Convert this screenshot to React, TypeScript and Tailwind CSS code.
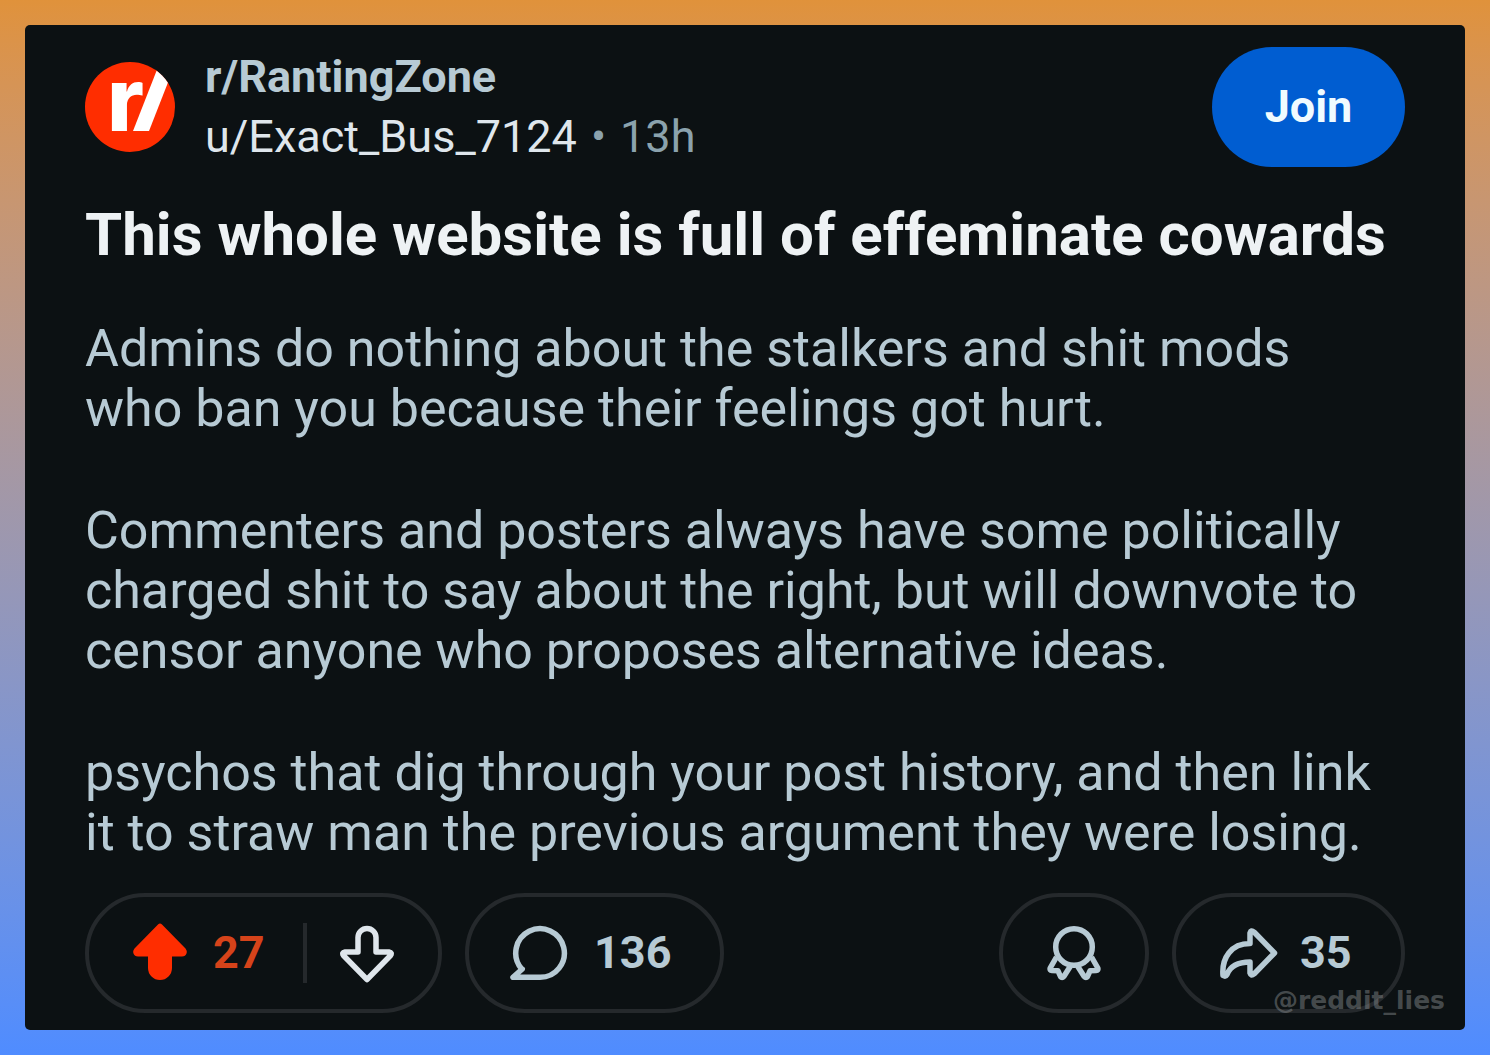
const paragraphs: string[][] = [
  ['Admins do nothing about the stalkers and shit mods', 'who ban you because their feelings got hurt.'],
  [
    'Commenters and posters always have some politically',
    'charged shit to say about the right, but will downvote to',
    'censor anyone who proposes alternative ideas.',
  ],
  [
    'psychos that dig through your post history, and then link',
    'it to straw man the previous argument they were losing.',
  ],
];

const pill = 'flex h-[120px] items-center rounded-full border-4 border-[#25292c]';

function CommunityLogo() {
  return (
    <svg viewBox="0 0 90 90" className="size-[90px] shrink-0 overflow-visible" role="img" aria-label="RantingZone">
      <defs>
        <clipPath id="logo-circle">
          <circle cx="45" cy="45" r="45" />
        </clipPath>
      </defs>
      <circle cx="45" cy="45" r="45" fill="#ff2d00" />
      <text x="22" y="69" fontFamily="Inter" fontWeight="800" fontSize="88" fill="#fff">
        r
      </text>
      <path d="M48 69L75 0H91L64 69Z" fill="#fff" stroke="#ff2d00" strokeWidth="4" paintOrder="stroke" clipPath="url(#logo-circle)" />
    </svg>
  );
}

function UpvoteIcon() {
  return (
    <svg viewBox="0 0 54 60" className="h-[60px] w-[54px]" aria-hidden="true">
      <path
        d="M25 1.500Q27 -.5 29 1.500L52.500 25.500Q54.500 28 53.500 30.500Q52.500 33.500 49 33.500H39V45A12 12 0 0 1 15 45V33.500H5Q1.500 33.500 .5 30.500Q-.5 28 1.500 25.500Z"
        fill="#ff2d00"
      />
    </svg>
  );
}

function DownvoteIcon() {
  return (
    <svg viewBox="0 -2 54 60" className="h-[60px] w-[54px]" fill="none" stroke="#dfe6ec" strokeWidth="5.5" strokeLinejoin="round" aria-hidden="true">
      <path d="M18 27V12.500A9 9 0 0 1 36 12.500V27H49Q52.500 27.500 50.500 30.500L27 54.500L3.500 30.500Q1.500 27.500 5 27Z" />
    </svg>
  );
}

function CommentIcon() {
  return (
    <svg viewBox="0 0 58 56" className="h-[56px] w-[58px]" fill="none" stroke="#b7cad4" strokeWidth="5.5" strokeLinejoin="round" aria-hidden="true">
      <path d="M3 52.300H30A24.300 24.300 0 1 0 11.500 43.700L12.300 44Z" />
    </svg>
  );
}

function AwardIcon() {
  return (
    <svg viewBox="0 -1 54 56" className="h-[56px] w-[54px]" fill="none" stroke="#b7cad4" strokeWidth="5.5" strokeLinejoin="round" aria-hidden="true">
      <circle cx="27" cy="21" r="18.300" />
      <path d="M9.500 31L3.200 42Q2.500 44.300 5 44.500L11 44.800L13.500 50.500Q15 52.500 16.800 50.500L23.500 40" />
      <path d="M44.500 31L50.800 42Q51.500 44.300 49 44.500L43 44.800L40.500 50.500Q39 52.500 37.200 50.500L30.500 40" />
    </svg>
  );
}

function ShareIcon() {
  return (
    <svg viewBox="-1 -1 58 52" className="h-[52px] w-[58px] overflow-visible" fill="none" stroke="#b7cad4" strokeWidth="5.5" strokeLinejoin="round" aria-hidden="true">
      <path d="M30 15.500V5Q31 1.500 34 4L54.500 25L34 46Q31 48.500 30 45V34C18 34 10.500 37.500 7 46.500Q5.500 49 3 47.500C1.500 30 11 15.500 30 15.500Z" />
    </svg>
  );
}

export default function App() {
  return (
    <main className="min-h-screen bg-linear-to-b from-[#e0923b] to-[#4f8cff] p-[25px] font-[Roboto,sans-serif]">
      <article className="relative rounded-[5px] bg-[#0c1113] px-[60px] pt-[22px] pb-[17px]">
        <header className="flex items-center gap-[30px]">
          <CommunityLogo />
          <div className="flex-1 text-[45px] leading-[60px]">
            <a href="#community" className="block font-bold text-[#b7cad4]">
              r/RantingZone
            </a>
            <p className="flex gap-[14px] text-[#8ba2ad]">
              <a href="#author" className="text-[#dfe6ec]">
                u/Exact_Bus_7124
              </a>
              <span>•</span>
              <span>13h</span>
            </p>
          </div>
          <button className="h-[120px] w-[193px] rounded-full bg-[#005dd1] text-[45px] font-bold text-[#f0fbff]">Join</button>
        </header>

        <h1 className="mt-[32px] text-[60px] leading-[72px] font-bold whitespace-nowrap text-[#eef2f4]">
          This whole website is full of effeminate cowards
        </h1>

        <div className="mt-[48px] flex flex-col gap-[62px] text-[52px] leading-[60px] whitespace-nowrap text-[#b7cad4]">
          {paragraphs.map((lines) => (
            <p key={lines[0]}>
              {lines.map((line) => (
                <span key={line} className="block">
                  {line}
                </span>
              ))}
            </p>
          ))}
        </div>

        <footer className="mt-[30px] flex items-center gap-[23px] text-[45px] font-bold text-[#b7cad4]">
          <div className={`${pill} w-[357px] pl-[44px]`}>
            <button className="flex items-center gap-[26px] text-[#d6431a]" aria-label="Upvote, 27 votes">
              <UpvoteIcon />
              27
            </button>
            <span className="mr-[33px] ml-auto h-[60px] w-1 bg-[#25292c]" />
            <button className="mr-11" aria-label="Downvote">
              <DownvoteIcon />
            </button>
          </div>
          <button className={`${pill} w-[259px] gap-[26px] pl-[41px]`} aria-label="136 comments">
            <CommentIcon />
            136
          </button>
          <button className={`${pill} ml-auto w-[150px] justify-center`} aria-label="Give award">
            <AwardIcon />
          </button>
          <button className={`${pill} w-[233px] gap-[23px] pl-[43px]`} aria-label="Share, 35 shares">
            <ShareIcon />
            35
          </button>
        </footer>

        <span className="absolute right-5 bottom-[14px] font-['DejaVu_Sans'] text-[25px] leading-[30px] font-bold text-[#8c9194]/45">
          @reddit_lies
        </span>
      </article>
    </main>
  );
}
